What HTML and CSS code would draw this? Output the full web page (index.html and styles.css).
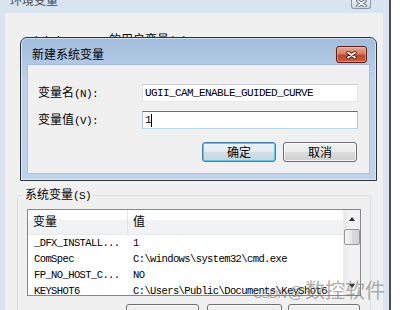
FILE: index.html
```html
<!DOCTYPE html>
<html lang="zh-CN">
<head>
<meta charset="utf-8">
<title>新建系统变量</title>
<link rel="stylesheet" href="styles.css">
</head>
<body>
<div class="desk">
  <div class="win">
    <div class="win-title">
      <span class="win-caption">环境变量</span>
      <span class="win-close">
        <svg width="11" height="7" viewBox="0 0 11 7"><path d="M2 1 L9 6 M9 1 L2 6" stroke="#56637a" stroke-width="3.4" stroke-linecap="round"/><path d="M2 1 L9 6 M9 1 L2 6" stroke="#fff" stroke-width="1.6" stroke-linecap="round"/></svg>
      </span>
    </div>
    <div class="win-body">
      <div class="user-group">
        <span class="user-label"><span class="m">Administrator </span>的用户变量<span class="m">(U)</span></span>
      </div>
      <fieldset class="group">
        <legend class="group-legend">系统变量<span class="m">(S)</span></legend>
        <div class="list">
          <div class="list-main">
            <div class="list-head">
              <div class="hcol hcol1">变量</div>
              <div class="hcol hcol2">值</div>
            </div>
            <div class="row"><span class="c1">_DFX_INSTALL...</span><span class="c2">1</span></div>
            <div class="row"><span class="c1">ComSpec</span><span class="c2">C:\windows\system32\cmd.exe</span></div>
            <div class="row"><span class="c1">FP_NO_HOST_C...</span><span class="c2">NO</span></div>
            <div class="row"><span class="c1">KEYSHOT6</span><span class="c2">C:\Users\Public\Documents\KeyShot6</span></div>
          </div>
          <div class="vscroll">
            <div class="sb-btn"><span class="arr-up"></span></div>
            <div class="sb-thumb"></div>
            <div class="sb-space"></div>
            <div class="sb-btn"><span class="arr-down"></span></div>
          </div>
        </div>
        <div class="btns">
          <div class="btn btn-new">新建<span class="m">(W)...</span></div>
          <div class="btn btn-edit">编辑<span class="m">(I)...</span></div>
          <div class="btn btn-del">删除<span class="m">(L)</span></div>
        </div>
      </fieldset>
    </div>
  </div>

  <div class="dlg">
    <div class="dlg-title">
      <span class="dlg-caption">新建系统变量</span>
      <span class="dlg-close">
        <svg width="11" height="8" viewBox="0 0 11 8"><path d="M2 1.5 L9 6.5 M9 1.5 L2 6.5" stroke="#4a1a12" stroke-width="3.4" stroke-linecap="round"/><path d="M2 1.5 L9 6.5 M9 1.5 L2 6.5" stroke="#fff" stroke-width="1.7" stroke-linecap="round"/></svg>
      </span>
    </div>
    <div class="dlg-content">
      <div class="field">
        <span class="label">变量名<span class="m">(N):</span></span>
        <div class="input"><span class="m">UGII_CAM_ENABLE_GUIDED_CURVE</span></div>
      </div>
      <div class="field">
        <span class="label">变量值<span class="m">(V):</span></span>
        <div class="input input-focus"><span class="m">1</span><span class="caret"></span></div>
      </div>
      <div class="dlg-btns">
        <div class="btn btn-default">确定</div>
        <div class="btn btn-cancel">取消</div>
      </div>
    </div>
  </div>

  <div class="watermark"><span class="wm-latin">CSDN</span><span class="wm-at">@</span><span class="wm-cjk">数控软件</span></div>
</div>
</body>
</html>
```

FILE: styles.css
```css
* { box-sizing: border-box; }

html, body {
  margin: 0;
  padding: 0;
  background: #ffffff;
  overflow: hidden;
}

body {
  font-family: "Noto Sans CJK SC", sans-serif;
  font-size: 12px;
  line-height: 14px;
  color: #000;
}

.m {
  font-family: "Liberation Mono", monospace;
  font-size: 11px;
  letter-spacing: -0.6px;
}

.desk {
  position: relative;
  width: 408px;
  height: 310px;
  overflow: hidden;
}

/* ---------- outer window ---------- */
.win {
  width: 391px;
  height: 310px;
  background: #d9e4f1;
  border-right: 2px solid #4b4f55;
  display: flex;
  flex-direction: column;
}

.win-title {
  height: 13px;
  display: flex;
  align-items: flex-start;
  padding-left: 10px;
  flex: none;
}

.win-caption {
  margin-top: -6px;
  line-height: 12px;
  color: #4a4a4a;
}

.win-close {
  margin-left: auto;
  margin-right: 18px;
  width: 20px;
  height: 9px;
  border: 1px solid #8a96a6;
  border-top: none;
  border-radius: 0 0 3px 3px;
  background: linear-gradient(#e9eef4, #cfd8e3);
  display: flex;
  align-items: flex-end;
  justify-content: center;
  padding-bottom: 1px;
}

.win-body {
  flex: 1;
  margin: 0 6px 0 5px;
  background: #f0f0f0;
  padding-left: 12px;
}

.user-group {
  height: 174px;
  padding-top: 19px;
}

.user-label {
  margin-left: 8px;
  line-height: 12px;
  color: #000;
}

/* ---------- system variables group ---------- */
.group {
  margin: 0;
  width: 354px;
  height: 140px;
  border: 1px solid #d5dfe5;
  border-radius: 3px;
  padding: 6px 9px 0 9px;
}

.group-legend {
  margin-left: -4px;
  padding: 0 2px;
  line-height: 14px;
}

.list {
  width: 334px;
  height: 87px;
  border: 1px solid #828790;
  background: #fff;
  display: flex;
}

.list-main {
  flex: 1;
  overflow: hidden;
}

.list-head {
  height: 25px;
  display: flex;
  background: linear-gradient(#ffffff 0, #ffffff 10px, #f1f2f4 10px, #f1f2f4 100%);
  border-bottom: 1px solid #e8e9eb;
}

.hcol {
  padding-top: 4px;
  padding-left: 5px;
}

.hcol1 {
  width: 100px;
  border-right: 1px solid #e3e4e6;
}

.row {
  height: 16px;
  display: flex;
  white-space: nowrap;
  font-family: "Liberation Mono", monospace;
  font-size: 10.5px;
  letter-spacing: -0.6px;
  line-height: 16px;
}

.c1 {
  width: 100px;
  padding-left: 6px;
  flex: none;
}

.c2 {
  padding-left: 5px;
}

.vscroll {
  width: 17px;
  flex: none;
  background: linear-gradient(to right, #e9e9e9, #f4f4f4 40%, #f1f1f1);
  border-left: 1px solid #ececec;
  display: flex;
  flex-direction: column;
}

.sb-btn {
  height: 18px;
  display: flex;
  align-items: center;
  justify-content: center;
}

.arr-up {
  width: 0;
  height: 0;
  border-left: 3.5px solid transparent;
  border-right: 3.5px solid transparent;
  border-bottom: 4px solid #2b2b2b;
}

.arr-down {
  width: 0;
  height: 0;
  border-left: 3.5px solid transparent;
  border-right: 3.5px solid transparent;
  border-top: 4px solid #2b2b2b;
}

.sb-thumb {
  margin: 1px 0 0 0;
  height: 16px;
  width: 16px;
  border: 1px solid #979797;
  border-radius: 2px;
  background: linear-gradient(to right, #f5f5f5, #e6e6e6 50%, #d9d9d9 51%, #d3d3d3);
}

.sb-space { flex: 1; }

.btns {
  display: flex;
  justify-content: flex-end;
  margin-top: 8px;
  padding-right: 1px;
}

.btn {
  height: 23px;
  border: 1px solid #707070;
  border-radius: 3px;
  background: linear-gradient(#f2f2f2 0%, #ebebeb 50%, #dddddd 50%, #cfcfcf 100%);
  box-shadow: inset 0 0 0 1px rgba(255, 255, 255, 0.7);
  display: flex;
  align-items: center;
  justify-content: center;
  flex: none;
}

.btn-new { width: 73px; }
.btn-edit { width: 75px; margin-left: 8px; }
.btn-del { width: 72px; margin-left: 6px; }

/* ---------- modal dialog ---------- */
.dlg {
  position: absolute;
  left: 20px;
  top: 37px;
  width: 357px;
  height: 144px;
  border: 1px solid #2f3134;
  border-radius: 7px 7px 0 0;
  background: linear-gradient(#a2bcdc 0, #b1c9e5 26px, #bad2ea 40px, #bdd4ec 100%);
  box-shadow: inset 0 0 0 1px rgba(225, 240, 255, 0.75);
  display: flex;
  flex-direction: column;
}

.dlg-title {
  height: 27px;
  display: flex;
  align-items: flex-start;
  padding-left: 11px;
  flex: none;
}

.dlg-caption {
  margin-top: 9px;
  color: #000;
}

.dlg-close {
  margin-left: auto;
  margin-right: 9px;
  margin-top: 8px;
  width: 31px;
  height: 17px;
  border: 1px solid #5e1e16;
  border-radius: 3px;
  background: linear-gradient(#e9a795 0%, #d77c66 45%, #c4442d 55%, #cf5c3f 100%);
  box-shadow: inset 0 0 0 1px rgba(255, 200, 190, 0.45);
  display: flex;
  align-items: center;
  justify-content: center;
}

.dlg-content {
  margin: 0 7px;
  height: 108px;
  background: #f0f0f0;
  box-shadow: 0 0 0 1px rgba(150, 175, 205, 0.5);
  padding: 19px 11px 0 10px;
  display: flex;
  flex-direction: column;
}

.field {
  display: flex;
  align-items: center;
  height: 18px;
  margin-bottom: 9px;
}

.label {
  width: 104px;
  flex: none;
}

.input {
  width: 216px;
  height: 18px;
  background: #fff;
  border: 1px solid;
  border-color: #c8cbd0 #dfe3e8 #e6eaee #dfe3e8;
  padding-left: 2px;
  display: flex;
  align-items: center;
  white-space: nowrap;
}

.input-focus {
  border-color: #3d7bad #a4c9e3 #b7d9ed #a4c9e3;
}

.caret {
  width: 1px;
  height: 13px;
  background: #000;
  margin-left: 0px;
}

.dlg-btns {
  display: flex;
  justify-content: flex-end;
  margin-top: 4px;
  padding-right: 1px;
  gap: 7px;
}

.dlg-btns .btn {
  width: 74px;
  height: 20px;
}

.btn-default {
  border-color: #3c7fb1;
  background: linear-gradient(#edf3f7 0%, #e3ebf1 50%, #d3dee6 50%, #c9d6df 100%);
  box-shadow: inset 0 0 0 1px #57c8f0;
}

/* ---------- watermark ---------- */
.watermark {
  position: absolute;
  left: 253px;
  top: 279px;
  color: rgba(120, 120, 120, 0.6);
  white-space: nowrap;
  display: flex;
  align-items: baseline;
  line-height: 22px;
}

.wm-latin {
  font-family: "Liberation Sans", sans-serif;
  font-size: 13px;
  letter-spacing: -1px;
}

.wm-at {
  font-family: "Liberation Sans", sans-serif;
  font-size: 16px;
  margin-left: 2px;
}

.wm-cjk {
  font-size: 20px;
  margin-left: 1px;
}
```
